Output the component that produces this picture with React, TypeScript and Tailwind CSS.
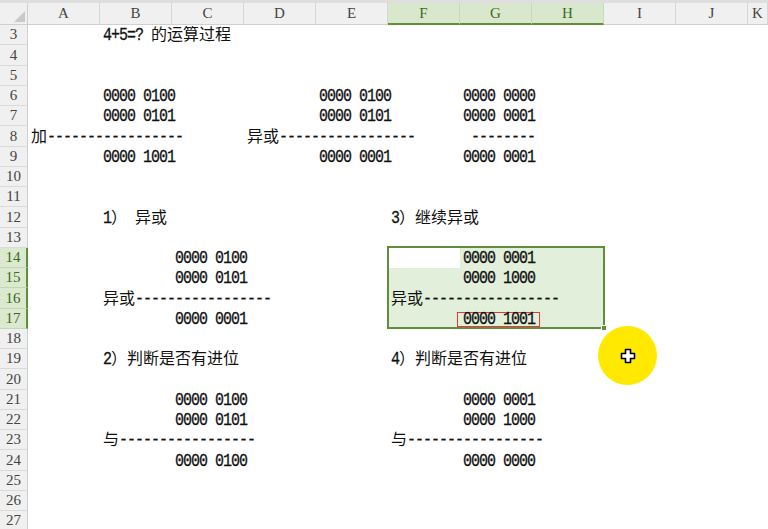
import React from 'react';

const COLS = ['A', 'B', 'C', 'D', 'E', 'F', 'G', 'H', 'I', 'J', 'K'];

const colStart: Record<number, string> = {
  1: 'col-start-1', 2: 'col-start-2', 3: 'col-start-3', 4: 'col-start-4',
  5: 'col-start-5', 6: 'col-start-6', 7: 'col-start-7', 8: 'col-start-8',
  9: 'col-start-9', 10: 'col-start-10', 11: 'col-start-11', 12: 'col-start-12'
};

const rowStart: Record<number, string> = {
  1: 'row-start-1', 2: 'row-start-2', 3: 'row-start-3', 4: 'row-start-4',
  5: 'row-start-5', 6: 'row-start-6', 7: 'row-start-7', 8: 'row-start-8',
  9: 'row-start-9', 10: 'row-start-10', 11: 'row-start-11', 12: 'row-start-12',
  13: 'row-start-13', 14: 'row-start-14', 15: 'row-start-15', 16: 'row-start-16',
  17: 'row-start-17', 18: 'row-start-18', 19: 'row-start-19', 20: 'row-start-20',
  21: 'row-start-21', 22: 'row-start-22', 23: 'row-start-23', 24: 'row-start-24',
  25: 'row-start-25', 26: 'row-start-26'
};

// sheet row -> grid row (header is grid row 1, sheet starts at row 3)
const gr = (row: number) => rowStart[row - 1];
// column letter -> grid column
const gc = (col: string) => colStart[COLS.indexOf(col) + 2];

const DASH = '-----------------';

const cells: [number, string, string][] = [
  [3, 'B', '4+5=? 的运算过程'],
  [6, 'B', '0000 0100'], [6, 'E', '0000 0100'], [6, 'G', '0000 0000'],
  [7, 'B', '0000 0101'], [7, 'E', '0000 0101'], [7, 'G', '0000 0001'],
  [8, 'A', '加' + DASH], [8, 'D', '异或' + DASH], [8, 'G', ' --------'],
  [9, 'B', '0000 1001'], [9, 'E', '0000 0001'], [9, 'G', '0000 0001'],
  [12, 'B', '1） 异或'], [12, 'F', '3）继续异或'],
  [14, 'C', '0000 0100'], [14, 'G', '0000 0001'],
  [15, 'C', '0000 0101'], [15, 'G', '0000 1000'],
  [16, 'B', '异或' + DASH], [16, 'F', '异或' + DASH],
  [17, 'C', '0000 0001'],
  [19, 'B', '2）判断是否有进位'], [19, 'F', '4）判断是否有进位'],
  [21, 'C', '0000 0100'], [21, 'G', '0000 0001'],
  [22, 'C', '0000 0101'], [22, 'G', '0000 1000'],
  [23, 'B', '与' + DASH], [23, 'F', '与' + DASH],
  [24, 'C', '0000 0100'], [24, 'G', '0000 0000']
];

const isWide = (ch: string) => ch.charCodeAt(0) >= 0x2e80;

const Txt = ({ s }: { s: string }) => {
  const runs: { wide: boolean; text: string }[] = [];
  for (const ch of s) {
    const wide = isWide(ch);
    const last = runs[runs.length - 1];
    if (last && last.wide === wide) last.text += ch;
    else runs.push({ wide, text: ch });
  }
  return (
    <span className="whitespace-pre leading-none">
      {runs.map((r, i) =>
        r.wide ? (
          <span key={i} className="font-['Noto_Sans_CJK_SC',sans-serif] text-[16px]">{r.text}</span>
        ) : (
          <span
            key={i}
            className="inline-block origin-[50%_77%] scale-y-[1.2] font-['Liberation_Mono',monospace] text-[15px] tracking-[-1px] [-webkit-text-stroke:0.25px_#111]"
          >
            {r.text}
          </span>
        )
      )}
    </span>
  );
};

const PlusCursor = () => (
  <svg width="16" height="16" viewBox="0 0 16 16">
    <path
      d="M5.5 1.5h5v4h4v5h-4v4h-5v-4h-4v-5h4z"
      fill="#fff"
      stroke="#000"
      strokeWidth="1.6"
      strokeLinejoin="round"
    />
  </svg>
);

const App = () => {
  const sheetRows = Array.from({ length: 25 }, (_, i) => i + 3);
  const selCols = ['F', 'G', 'H'];
  const selRows = [14, 15, 16, 17];

  return (
    <div className="relative w-[768px] h-[529px] overflow-hidden bg-white text-[#111]">
      <div className="h-[3px] bg-[#dedede]" />
      <div className="grid grid-cols-[28px_repeat(10,72px)_1fr] grid-rows-[22px_repeat(25,20.25px)]">
        {/* corner */}
        <div className="col-start-1 row-start-1 bg-[#f0f0f0] border-b border-r border-[#cfcfcf] flex items-end justify-end pr-[2px] pb-[2px]">
          <svg width="11" height="11" viewBox="0 0 11 11">
            <polygon points="11,0 11,11 0,11" fill="#c9c9c9" />
          </svg>
        </div>

        {/* column headers */}
        {COLS.map((c, i) => {
          const sel = selCols.includes(c);
          return (
            <div
              key={c}
              className={`${colStart[i + 2]} row-start-1 flex items-center justify-center font-['Liberation_Serif',serif] text-[15px] border-r ${
                sel
                  ? 'bg-[#d9e8cd] text-[#3b6b21] border-[#c6dab6] border-b-2 border-b-[#5f8f3b]'
                  : 'bg-[#f0f0f0] text-[#444] border-[#d6d6d6] border-b border-b-[#cfcfcf]'
              }`}
            >
              {c}
            </div>
          );
        })}

        {/* row headers */}
        {sheetRows.map((r) => {
          const sel = selRows.includes(r);
          return (
            <div
              key={r}
              className={`col-start-1 ${gr(r)} flex items-center justify-center font-['Liberation_Serif',serif] text-[15px] border-b ${
                sel
                  ? 'bg-[#dbe9cf] text-[#3b6b21] border-[#c3d8b2] border-r-2 border-r-[#5f8f3b]'
                  : 'bg-[#f0f0f0] text-[#444] border-[#dadada] border-r border-r-[#cfcfcf]'
              }`}
            >
              {r}
            </div>
          );
        })}

        {/* selection fill */}
        <div className="col-start-7 col-span-3 row-start-13 row-span-4 bg-[#e2efda]" />
        <div className="col-start-7 row-start-13 bg-white" />

        {/* cell text */}
        {cells.map(([r, c, s], i) => (
          <div
            key={i}
            className={`${gc(c)} ${gr(r)} flex items-end pl-[3px] pb-[1px] leading-none`}
          >
            <Txt s={s} />
          </div>
        ))}

        {/* highlighted result */}
        <div className={`${gc('G')} ${gr(17)} flex items-center pt-[1px] leading-none`}>
          <span className="-ml-[3px] h-[15px] flex items-center border border-[#e53935] pl-[5px] pr-[4px]">
            <Txt s="0000 1001" />
          </span>
        </div>

        {/* selection border */}
        <div className="relative col-start-7 col-span-3 row-start-13 row-span-4 -mt-[2px] -ml-[1px] -mr-[1px] border-2 border-[#5f8f3b]">
          <div className="absolute -right-[4px] -bottom-[4px] w-[6px] h-[6px] bg-[#5f8f3b] border border-white" />
        </div>
      </div>

      {/* cursor highlight */}
      <div className="absolute left-[598px] top-[326px] w-[59px] h-[59px] rounded-full bg-[#ffe900] flex items-center justify-center">
        <PlusCursor />
      </div>
    </div>
  );
};

export default App;
